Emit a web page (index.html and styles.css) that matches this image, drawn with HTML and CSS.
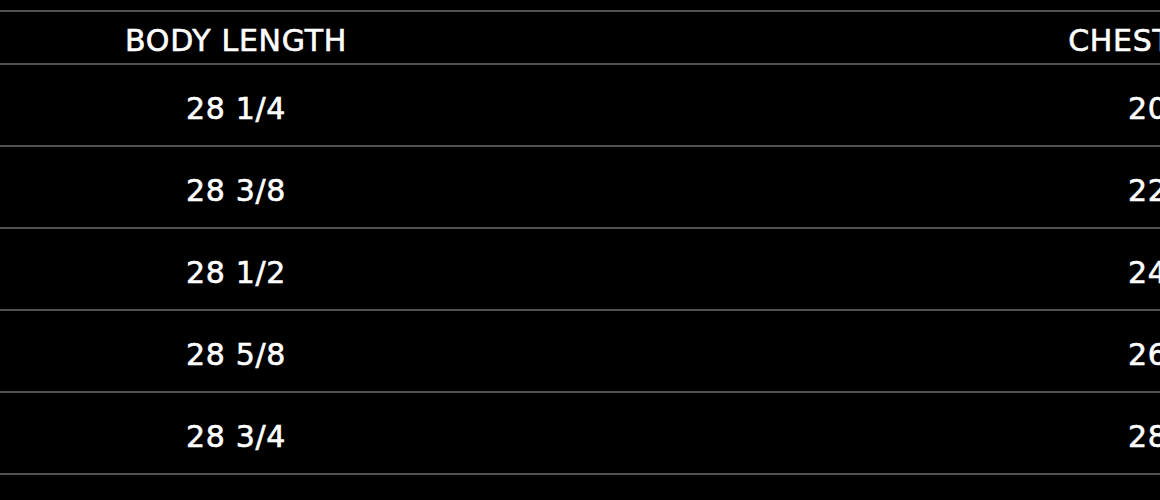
FILE: index.html
```html
<!DOCTYPE html>
<html lang="en">
<head>
<meta charset="utf-8">
<title>Size chart</title>
<link rel="stylesheet" href="styles.css">
</head>
<body>
<div class="viewport">
  <div class="size-table">
    <div class="row head">
      <div class="cell">BODY LENGTH</div>
      <div class="cell">CHEST WIDTH</div>
    </div>
    <div class="row">
      <div class="cell">28 1/4</div>
      <div class="cell">20 1/2</div>
    </div>
    <div class="row">
      <div class="cell">28 3/8</div>
      <div class="cell">22 1/2</div>
    </div>
    <div class="row">
      <div class="cell">28 1/2</div>
      <div class="cell">24 1/2</div>
    </div>
    <div class="row">
      <div class="cell">28 5/8</div>
      <div class="cell">26 1/2</div>
    </div>
    <div class="row">
      <div class="cell">28 3/4</div>
      <div class="cell">28 1/2</div>
    </div>
  </div>
</div>
</body>
</html>
```

FILE: styles.css
```css
html, body {
  margin: 0;
  padding: 0;
  background: #000;
  overflow: hidden;
}

.viewport {
  width: 1160px;
  height: 500px;
  overflow: hidden;
  padding-top: 10px;
  box-sizing: border-box;
}

.size-table {
  width: 1884px;
  margin-left: -235px;
  border-top: 2px solid #525252;
  font-family: "DejaVu Sans", "Open Sans", sans-serif;
  font-size: 30px;
  letter-spacing: 0.7px;
  color: #fff;
  -webkit-text-stroke: 0.6px #fff;
}

.row {
  display: grid;
  grid-template-columns: 1fr 1fr;
  height: 80px;
  border-bottom: 2px solid #525252;
}

.row.head {
  height: 51px;
}

.cell {
  display: flex;
  align-items: center;
  justify-content: center;
  padding-top: 7px;
  box-sizing: border-box;
}

.row.head .cell {
  padding-top: 5px;
}
```
